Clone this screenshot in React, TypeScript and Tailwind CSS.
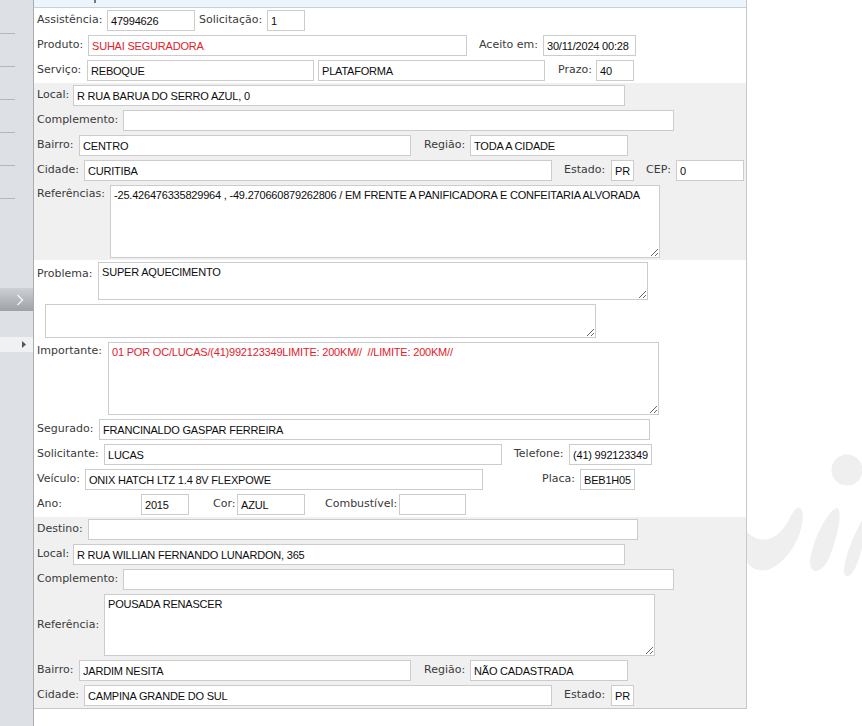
import React from 'react';

const inputCls =
  "h-[21px] shrink-0 border border-[#cccccc] bg-white px-[3px] text-[11px] tracking-[-0.2px] text-[#0d0d0d] outline-none font-['Liberation_Sans',Arial,sans-serif]";

const areaCls =
  "shrink-0 border border-[#cccccc] bg-white px-[3px] py-[3px] text-[11px] leading-[13px] tracking-[-0.2px] text-[#0d0d0d] outline-none font-['Liberation_Sans',Arial,sans-serif]";

const Label = ({ className = '', children }: { className?: string; children: React.ReactNode }) => (
  <span className={`shrink-0 whitespace-nowrap ${className}`}>{children}</span>
);

const Field = ({ className = '', value }: { className?: string; value: string }) => (
  <input readOnly value={value} className={`${inputCls} ${className}`} />
);

const Area = ({ className = '', value }: { className?: string; value: string }) => (
  <textarea readOnly value={value} className={`${areaCls} ${className}`} />
);

const Row = ({ className = 'items-center', children }: { className?: string; children: React.ReactNode }) => (
  <div className={`flex ${className}`}>{children}</div>
);

const Sidebar = () => (
  <div className="flex w-[34px] shrink-0 flex-col border-r border-[#a9adb1] bg-[#dde0e4] pt-[1px]">
    {[0, 1, 2, 3, 4, 5].map((i) => (
      <div key={i} className="h-[33px] w-[15px] border-b border-[#b3b7bb]" />
    ))}
    <div className="mt-[89px] flex h-[23px] items-center bg-gradient-to-b from-[#cdd1d5] to-[#9da2a7] pl-[16px]">
      <svg width="8" height="12" viewBox="0 0 8 12">
        <polyline points="1.5,1 6.5,6 1.5,11" fill="none" stroke="#f4f6f8" strokeWidth="1.4" />
      </svg>
    </div>
    <div className="mt-[26px] flex h-[15px] items-center bg-[#eff1f3] pl-[22px]">
      <svg width="4" height="7" viewBox="0 0 4 7">
        <polygon points="0,0 4,3.5 0,7" fill="#555555" />
      </svg>
    </div>
  </div>
);

const Logo = () => (
  <svg width="115" height="200" viewBox="747 430 115 200">
    <circle cx="847" cy="470" r="15.5" fill="#efefef" />
    <path
      d="M747 532 C760 545 778 542 790 518 C794 509 799 504 802 510 C806 528 792 558 772 568 C760 574 750 568 747 562 Z"
      fill="#efefef"
    />
    <path
      d="M837 508 C843 511 838 536 829 558 C823 572 811 576 810 563 C810 546 827 510 837 508 Z"
      fill="#efefef"
    />
    <path d="M862 520 L862 548 C858 562 853 578 846 576 C840 573 848 546 862 520 Z" fill="#efefef" />
  </svg>
);

export default function App() {
  return (
    <div className="flex h-[726px] w-full overflow-hidden bg-white font-['DejaVu_Sans',Verdana,sans-serif] text-[11px] text-[#3a3a3a]">
      <Sidebar />

      <div className="flex h-[709px] w-[713px] shrink-0 flex-col border-r border-b border-[#c8c8c8]">
        {/* header strip */}
        <div className="flex h-[8px] shrink-0 border-b border-[#c6d1dc] bg-[#edf5fc]">
          <span className="ml-[60px] h-[3px] w-[2px] bg-[#777777]" />
        </div>

        {/* atendimento */}
        <div className="flex flex-col gap-[4px] bg-white py-[2px] pl-[3px]">
          <Row>
            <Label className="w-[70px]">Assistência:</Label>
            <Field className="w-[88px]" value="47994626" />
            <Label className="ml-[4px] w-[68px]">Solicitação:</Label>
            <Field className="w-[38px]" value="1" />
          </Row>
          <Row>
            <Label className="w-[51px]">Produto:</Label>
            <Field className="w-[379px] !text-[#e3212b]" value="SUHAI SEGURADORA" />
            <Label className="ml-[12px] w-[64px]">Aceito em:</Label>
            <Field className="w-[93px]" value="30/11/2024 00:28" />
          </Row>
          <Row>
            <Label className="w-[50px]">Serviço:</Label>
            <Field className="w-[227px]" value="REBOQUE" />
            <Field className="ml-[4px] w-[227px]" value="PLATAFORMA" />
            <Label className="ml-[13px] w-[38px]">Prazo:</Label>
            <Field className="w-[38px]" value="40" />
          </Row>
        </div>

        {/* origem */}
        <div className="flex flex-col gap-[4px] bg-[#f0f0f0] py-[2px] pl-[3px]">
          <Row>
            <Label className="w-[36px]">Local:</Label>
            <Field className="w-[552px]" value="R RUA BARUA DO SERRO AZUL, 0" />
          </Row>
          <Row>
            <Label className="w-[86px]">Complemento:</Label>
            <Field className="w-[551px]" value="" />
          </Row>
          <Row>
            <Label className="w-[42px]">Bairro:</Label>
            <Field className="w-[332px]" value="CENTRO" />
            <Label className="ml-[13px] w-[46px]">Região:</Label>
            <Field className="w-[158px]" value="TODA A CIDADE" />
          </Row>
          <Row>
            <Label className="w-[47px]">Cidade:</Label>
            <Field className="w-[468px]" value="CURITIBA" />
            <Label className="ml-[12px] w-[47px]">Estado:</Label>
            <Field className="w-[23px]" value="PR" />
            <Label className="ml-[12px] w-[30px]">CEP:</Label>
            <Field className="w-[68px]" value="0" />
          </Row>
          <Row className="items-start">
            <Label className="w-[73px] pt-[1px]">Referências:</Label>
            <Area
              className="h-[73px] w-[550px]"
              value="-25.426476335829964 , -49.270660879262806 / EM FRENTE A PANIFICADORA E CONFEITARIA ALVORADA"
            />
          </Row>
        </div>

        {/* problema / veículo */}
        <div className="flex flex-col gap-[4px] bg-white py-[2px] pl-[3px]">
          <Row className="items-start">
            <Label className="w-[61px] pt-[4px]">Problema:</Label>
            <Area className="h-[38px] w-[550px]" value="SUPER AQUECIMENTO" />
          </Row>
          <Row>
            <Area className="ml-[8px] h-[34px] w-[551px]" value="" />
          </Row>
          <Row className="items-start">
            <Label className="w-[71px] pt-[1px]">Importante:</Label>
            <Area
              className="h-[73px] w-[551px] !text-[#e3212b]"
              value="01 POR OC/LUCAS/(41)992123349LIMITE: 200KM//  //LIMITE: 200KM//"
            />
          </Row>
          <Row>
            <Label className="w-[62px]">Segurado:</Label>
            <Field className="w-[551px]" value="FRANCINALDO GASPAR FERREIRA" />
          </Row>
          <Row>
            <Label className="w-[67px]">Solicitante:</Label>
            <Field className="w-[398px]" value="LUCAS" />
            <Label className="ml-[12px] w-[55px]">Telefone:</Label>
            <Field className="w-[83px]" value="(41) 992123349" />
          </Row>
          <Row>
            <Label className="w-[48px]">Veículo:</Label>
            <Field className="w-[398px]" value="ONIX HATCH LTZ 1.4 8V FLEXPOWE" />
            <Label className="ml-[59px] w-[38px]">Placa:</Label>
            <Field className="w-[55px]" value="BEB1H05" />
          </Row>
          <Row>
            <Label className="w-[104px]">Ano:</Label>
            <Field className="w-[48px]" value="2015" />
            <Label className="ml-[24px] w-[24px]">Cor:</Label>
            <Field className="w-[68px]" value="AZUL" />
            <Label className="ml-[20px] w-[74px]">Combustível:</Label>
            <Field className="w-[67px]" value="" />
          </Row>
        </div>

        {/* destino */}
        <div className="flex flex-col gap-[4px] bg-[#f0f0f0] py-[2px] pl-[3px]">
          <Row>
            <Label className="w-[51px]">Destino:</Label>
            <Field className="w-[550px]" value="" />
          </Row>
          <Row>
            <Label className="w-[36px]">Local:</Label>
            <Field className="w-[552px]" value="R RUA WILLIAN FERNANDO LUNARDON, 365" />
          </Row>
          <Row>
            <Label className="w-[86px]">Complemento:</Label>
            <Field className="w-[551px]" value="" />
          </Row>
          <Row>
            <Label className="w-[67px]">Referência:</Label>
            <Area className="h-[62px] w-[551px]" value="POUSADA RENASCER" />
          </Row>
          <Row>
            <Label className="w-[42px]">Bairro:</Label>
            <Field className="w-[332px]" value="JARDIM NESITA" />
            <Label className="ml-[13px] w-[46px]">Região:</Label>
            <Field className="w-[158px]" value="NÃO CADASTRADA" />
          </Row>
          <Row>
            <Label className="w-[47px]">Cidade:</Label>
            <Field className="w-[468px]" value="CAMPINA GRANDE DO SUL" />
            <Label className="ml-[12px] w-[47px]">Estado:</Label>
            <Field className="w-[23px]" value="PR" />
          </Row>
        </div>
      </div>

      <div className="flex-1 pt-[430px]">
        <Logo />
      </div>
    </div>
  );
}
